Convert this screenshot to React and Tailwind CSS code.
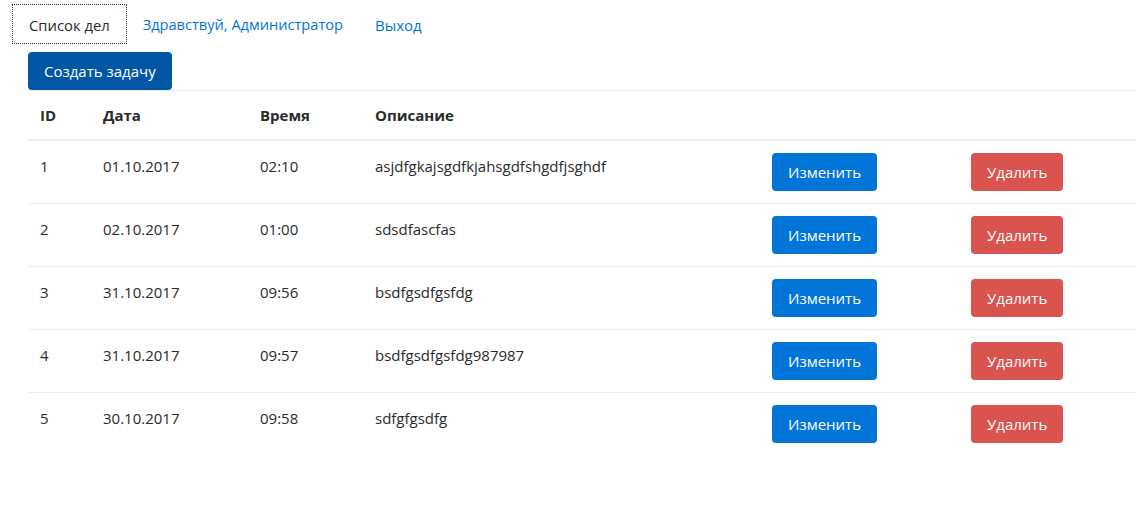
import React from "react";

const rows = [
  ["1", "01.10.2017", "02:10", "asjdfgkajsgdfkjahsgdfshgdfjsghdf"],
  ["2", "02.10.2017", "01:00", "sdsdfascfas"],
  ["3", "31.10.2017", "09:56", "bsdfgsdfgsfdg"],
  ["4", "31.10.2017", "09:57", "bsdfgsdfgsfdg987987"],
  ["5", "30.10.2017", "09:58", "sdfgfgsdfg"],
];

export default function App() {
  return (
    <div
      className="w-[1136px] h-[506px] overflow-hidden bg-white text-[#292b2c] text-[15px]"
      style={{ fontFamily: '"Open Sans", "Noto Sans", sans-serif' }}
    >
      <div className="flex pt-[4px] pl-[12px]">
        <a className="h-[40px] px-[16px] pt-[2px] flex items-center border border-dotted border-[#1a2a4a] text-[#292b2c] text-[14.8px]">
          Список дел
        </a>
        <a className="h-[40px] px-[16px] pt-[2px] flex items-center text-[#0275d8] text-[14.6px]">
          Здравствуй, Администратор
        </a>
        <a className="h-[40px] px-[16px] pt-[2px] flex items-center text-[#0275d8]">
          Выход
        </a>
      </div>
      <div className="pl-[28px] pt-[8px]">
        <button className="h-[38px] px-[16px] pt-[1px] rounded-[4px] bg-[#0257a4] text-white">
          Создать задачу
        </button>
      </div>
      <div className="pl-[28px]">
        <table className="w-[1140px] border-collapse table-fixed">
          <colgroup>
            <col className="w-[63px]" />
            <col className="w-[157px]" />
            <col className="w-[115px]" />
            <col className="w-[397px]" />
            <col className="w-[199px]" />
            <col className="w-[209px]" />
          </colgroup>
          <thead>
            <tr>
              {["ID", "Дата", "Время", "Описание", "", ""].map((h, i) => (
                <th
                  key={i}
                  className="text-left font-bold px-[12px] py-[12px] leading-[24px] border-t border-b-2 border-[#eceeef]"
                >
                  {h}
                </th>
              ))}
            </tr>
          </thead>
          <tbody>
            {rows.map((r, ri) => (
              <tr key={r[0]} className={ri > 0 ? "border-t border-[#eceeef]" : ""}>
                {r.map((c, i) => (
                  <td key={i} className="align-top px-[12px] pt-[13px] pb-[11px] leading-[24px]">
                    {c}
                  </td>
                ))}
                <td className="align-top px-[12px] py-[12px]">
                  <button className="h-[38px] px-[16px] rounded-[4px] bg-[#0275d8] text-white">
                    Изменить
                  </button>
                </td>
                <td className="align-top px-[12px] py-[12px]">
                  <button className="h-[38px] px-[16px] rounded-[4px] bg-[#d9534f] text-white">
                    Удалить
                  </button>
                </td>
              </tr>
            ))}
          </tbody>
        </table>
      </div>
    </div>
  );
}
